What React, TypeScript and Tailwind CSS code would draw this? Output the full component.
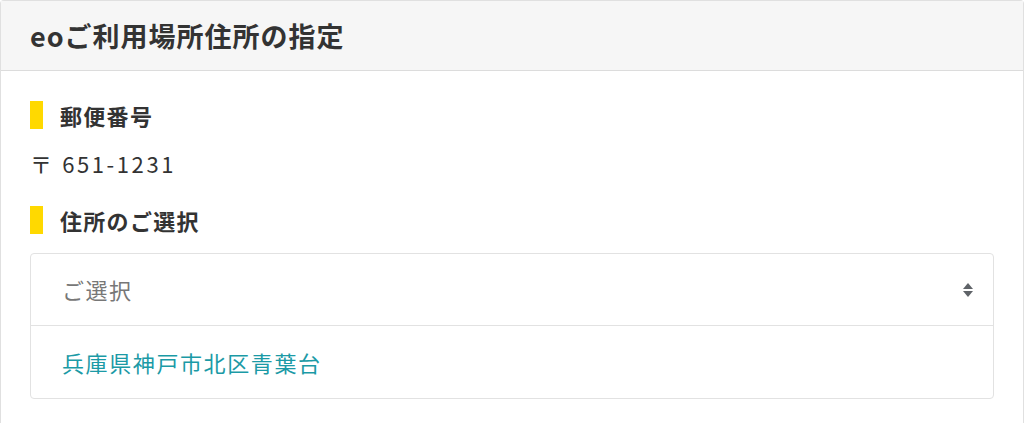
import React from 'react';

const font = { fontFamily: '"Noto Sans CJK JP", "Open Sans", sans-serif' };

function Heading({ children }: { children: React.ReactNode }) {
  return (
    <div className="flex items-center h-[28px]">
      <span className="w-[13px] h-[28px] bg-[#ffd900]" />
      <span className="ml-[17px] text-[22px] leading-[28px] font-bold tracking-[1.3px] text-[#333]">{children}</span>
    </div>
  );
}

export default function App() {
  return (
    <div className="w-[1024px] h-[423px] bg-white" style={font}>
      <div className="border border-b-0 border-[#e0e0e0] rounded-t-[4px] h-full">
        <div className="h-[70px] flex items-center px-[29px] bg-[#f6f6f6] border-b border-[#dcdcdc]">
          <h1 className="text-[27px] leading-[36px] font-bold tracking-[1px] text-[#333]">eoご利用場所住所の指定</h1>
        </div>
        <div className="px-[29px] pt-[30px]">
          <Heading>郵便番号</Heading>
          <p className="mt-[19px] h-[30px] leading-[30px] text-[22px] tracking-[2.6px] text-[#333]">〒 651-1231</p>
          <div className="mt-[28px]">
            <Heading>住所のご選択</Heading>
          </div>
          <div className="mt-[19px] border border-[#e2e2e2] rounded-[4px]">
            <div className="h-[72px] flex items-center justify-between pl-[31px] pr-[19px] border-b border-[#e2e2e2]">
              <span className="text-[22px] tracking-[1.5px] text-[#777]">ご選択</span>
              <svg width="12" height="16" viewBox="0 0 12 16">
                <path d="M6 1 L11 7 H1 Z" fill="#5f6368" />
                <path d="M6 15 L11 9 H1 Z" fill="#5f6368" />
              </svg>
            </div>
            <div className="h-[72px] flex items-center pl-[31px]">
              <span className="text-[22px] tracking-[1.6px] text-[#1b9aa6]">兵庫県神戸市北区青葉台</span>
            </div>
          </div>
        </div>
      </div>
    </div>
  );
}
